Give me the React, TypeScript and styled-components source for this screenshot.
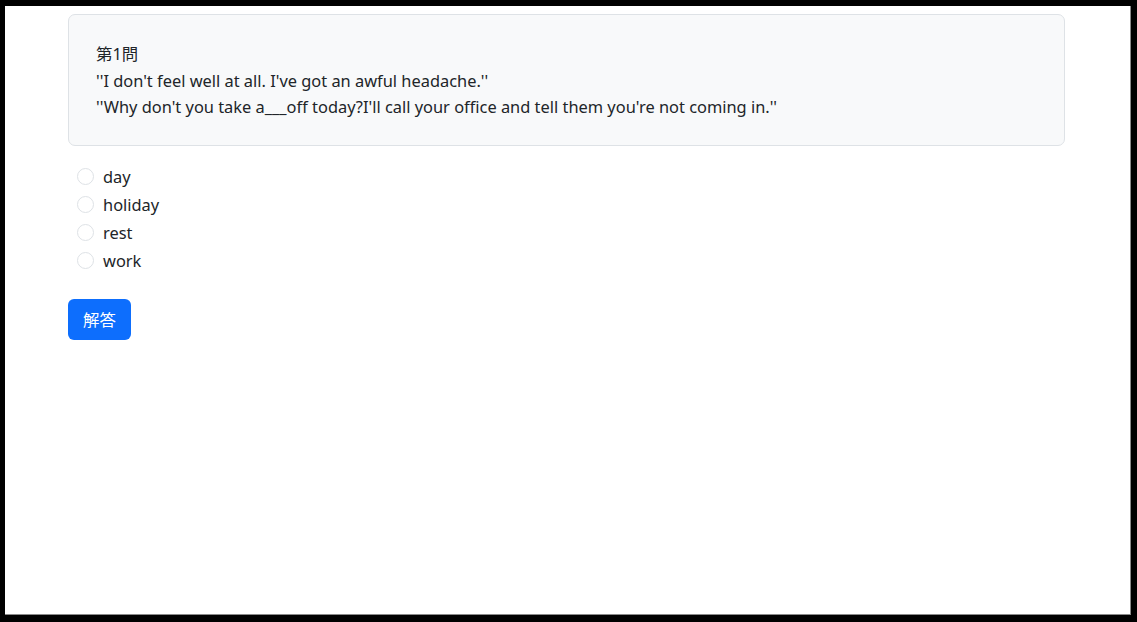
import React from "react";
import styled, { createGlobalStyle } from "styled-components";

const Global = createGlobalStyle`
  html, body { margin: 0; padding: 0; background: #000; }
  body {
    font-family: "Noto Sans", "Noto Sans CJK JP", sans-serif;
    color: #212529;
    font-size: 16.4px;
  }
  * { box-sizing: border-box; }
`;

const Screen = styled.div`
  margin: 6px 6px 0 5px;
  width: 1126px;
  height: 609px;
  background: #fff;
  border-right: 1px solid #8a8a8a;
  border-bottom: 1px solid #8a8a8a;
  padding: 8px 0 0 63px;
`;

const Main = styled.div`
  width: 997px;
`;

const Card = styled.div`
  background: #f8f9fa;
  border: 1px solid #dee2e6;
  border-radius: 7px;
  padding: 26px 27px 24px 27px;
  font-size: 16.4px;
  line-height: 26.6px;
`;

const Line = styled.div`
  white-space: nowrap;
`;

const Options = styled.div`
  display: flex;
  flex-direction: column;
  margin-top: 17px;
  padding-left: 9px;
`;

const Option = styled.label`
  display: flex;
  align-items: center;
  gap: 9px;
  height: 28px;
  font-size: 16.4px;
  cursor: pointer;
`;

const Radio = styled.input.attrs({ type: "radio" })`
  appearance: none;
  margin: 0;
  width: 17px;
  height: 17px;
  border: 1px solid #dee2e6;
  border-radius: 50%;
  background: #fff;
`;

const Button = styled.button`
  margin-top: 24px;
  width: 63px;
  height: 41px;
  border: none;
  border-radius: 6px;
  background: #0d6efd;
  color: #fff;
  font-family: "Noto Sans CJK JP", sans-serif;
  font-size: 16.4px;
  padding: 0;
`;

const options = ["day", "holiday", "rest", "work"];

export default function App() {
  return (
    <>
      <Global />
      <Screen>
        <Main>
          <Card>
            <Line>第1問</Line>
            <Line>''I don't feel well at all. I've got an awful headache.''</Line>
            <Line>''Why don't you take a___off today?I'll call your office and tell them you're not coming in.''</Line>
          </Card>
          <Options>
            {options.map((o) => (
              <Option key={o}>
                <Radio name="q1" value={o} />
                {o}
              </Option>
            ))}
          </Options>
          <Button>解答</Button>
        </Main>
      </Screen>
    </>
  );
}
